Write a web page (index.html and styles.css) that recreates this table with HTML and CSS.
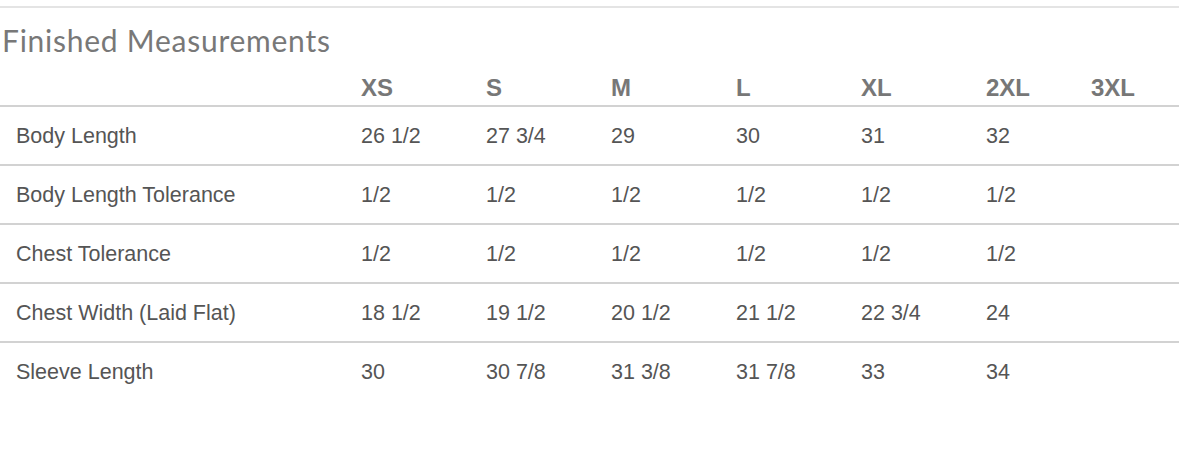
FILE: index.html
```html
<!DOCTYPE html>
<html>
<head>
<meta charset="utf-8">
<link rel="stylesheet" href="styles.css">
</head>
<body>
<div class="page">
  <div class="top-rule"></div>
  <h2 class="title">Finished Measurements</h2>
  <div class="table">
    <div class="row head">
      <div class="cell label"></div>
      <div class="cell">XS</div>
      <div class="cell">S</div>
      <div class="cell">M</div>
      <div class="cell">L</div>
      <div class="cell">XL</div>
      <div class="cell">2XL</div>
      <div class="cell">3XL</div>
    </div>
    <div class="row">
      <div class="cell label">Body Length</div>
      <div class="cell">26 1/2</div>
      <div class="cell">27 3/4</div>
      <div class="cell">29</div>
      <div class="cell">30</div>
      <div class="cell">31</div>
      <div class="cell">32</div>
      <div class="cell"></div>
    </div>
    <div class="row">
      <div class="cell label">Body Length Tolerance</div>
      <div class="cell">1/2</div>
      <div class="cell">1/2</div>
      <div class="cell">1/2</div>
      <div class="cell">1/2</div>
      <div class="cell">1/2</div>
      <div class="cell">1/2</div>
      <div class="cell"></div>
    </div>
    <div class="row">
      <div class="cell label">Chest Tolerance</div>
      <div class="cell">1/2</div>
      <div class="cell">1/2</div>
      <div class="cell">1/2</div>
      <div class="cell">1/2</div>
      <div class="cell">1/2</div>
      <div class="cell">1/2</div>
      <div class="cell"></div>
    </div>
    <div class="row">
      <div class="cell label">Chest Width (Laid Flat)</div>
      <div class="cell">18 1/2</div>
      <div class="cell">19 1/2</div>
      <div class="cell">20 1/2</div>
      <div class="cell">21 1/2</div>
      <div class="cell">22 3/4</div>
      <div class="cell">24</div>
      <div class="cell"></div>
    </div>
    <div class="row last">
      <div class="cell label">Sleeve Length</div>
      <div class="cell">30</div>
      <div class="cell">30 7/8</div>
      <div class="cell">31 3/8</div>
      <div class="cell">31 7/8</div>
      <div class="cell">33</div>
      <div class="cell">34</div>
      <div class="cell"></div>
    </div>
  </div>
</div>
</body>
</html>
```
FILE: styles.css
```css
html, body {
  margin: 0;
  padding: 0;
  background: #ffffff;
}

.page {
  width: 1179px;
  padding-top: 6px;
}

.top-rule {
  height: 2px;
  background: #e4e4e4;
}

.title {
  margin: 16px 0 0 2px;
  font-family: "Lato", "Noto Sans", sans-serif;
  font-weight: 400;
  font-size: 30px;
  line-height: 33px;
  letter-spacing: 0.75px;
  color: #787878;
}

.table {
  display: flex;
  flex-direction: column;
}

.row {
  display: grid;
  grid-template-columns: 361px 125px 125px 125px 125px 125px 105px 1fr;
  padding: 15.5px 0;
  border-bottom: 2px solid #d2d2d2;
  font-family: "Liberation Sans", Arial, sans-serif;
  font-size: 21.5px;
  line-height: 26px;
  color: #555555;
}

.row.last {
  border-bottom: none;
}

.row.head {
  padding: 17px 0 3px;
  font-size: 24px;
  line-height: 28px;
  font-weight: 700;
  color: #777777;
}

.cell.label {
  padding-left: 16px;
}
```
